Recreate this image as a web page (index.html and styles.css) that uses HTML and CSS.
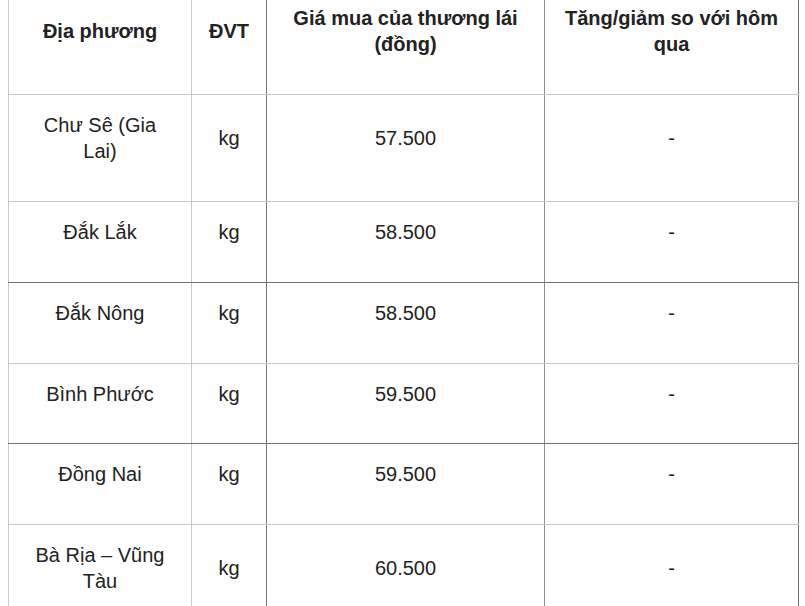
FILE: index.html
```html
<!DOCTYPE html>
<html lang="vi">
<head>
<meta charset="utf-8">
<title>Giá tiêu</title>
<link rel="stylesheet" href="styles.css">
</head>
<body>
<table class="price-table">
  <colgroup>
    <col class="c1"><col class="c2"><col class="c3"><col class="c4">
  </colgroup>
  <thead>
    <tr class="head-row">
      <th>Địa phương</th>
      <th>ĐVT</th>
      <th>Giá mua của thương lái (đồng)</th>
      <th>Tăng/giảm so với hôm qua</th>
    </tr>
  </thead>
  <tbody>
    <tr>
      <td>Chư Sê (Gia Lai)</td><td>kg</td><td>57.500</td><td>-</td>
    </tr>
    <tr class="dark-bottom">
      <td>Đắk Lắk</td><td>kg</td><td>58.500</td><td>-</td>
    </tr>
    <tr>
      <td>Đắk Nông</td><td>kg</td><td>58.500</td><td>-</td>
    </tr>
    <tr class="dark-bottom tight">
      <td>Bình Phước</td><td>kg</td><td>59.500</td><td>-</td>
    </tr>
    <tr>
      <td>Đồng Nai</td><td>kg</td><td>59.500</td><td>-</td>
    </tr>
    <tr>
      <td>Bà Rịa – Vũng Tàu</td><td>kg</td><td>60.500</td><td>-</td>
    </tr>
  </tbody>
</table>
</body>
</html>
```

FILE: styles.css
```css
html, body {
  margin: 0;
  padding: 0;
  background: #ffffff;
}

body {
  padding: 0 8px;
  overflow: hidden;
  font-family: "Liberation Sans", Arial, sans-serif;
  color: #222222;
}

.price-table {
  margin-top: -13px;
  width: 791px;
  table-layout: fixed;
  border-collapse: collapse;
  font-size: 20px;
  line-height: 26px;
}

.c1 { width: 183px; }
.c2 { width: 75px; }
.c3 { width: 278px; }
.c4 { width: 254px; }

.price-table th,
.price-table td {
  border: 1px solid #c9c9c9;
  padding: 17px 10px 37px;
  text-align: center;
  vertical-align: middle;
}

.price-table th:first-child,
.price-table td:first-child {
  padding-left: 20px;
  padding-right: 20px;
}

.price-table .tight td {
  padding-bottom: 36px;
}

.price-table th {
  font-weight: bold;
  color: #222222;
}

.price-table td {
  font-weight: normal;
}

.price-table th:nth-child(2),
.price-table td:nth-child(2) {
  border-right-color: #777777;
}

.price-table th:nth-child(3),
.price-table td:nth-child(3) {
  border-right-color: #8e8e8e;
}

.price-table th:nth-child(4),
.price-table td:nth-child(4) {
  border-right-color: #6f6f6f;
}

.price-table .dark-bottom td {
  border-bottom-color: #6f6f6f;
}
```
